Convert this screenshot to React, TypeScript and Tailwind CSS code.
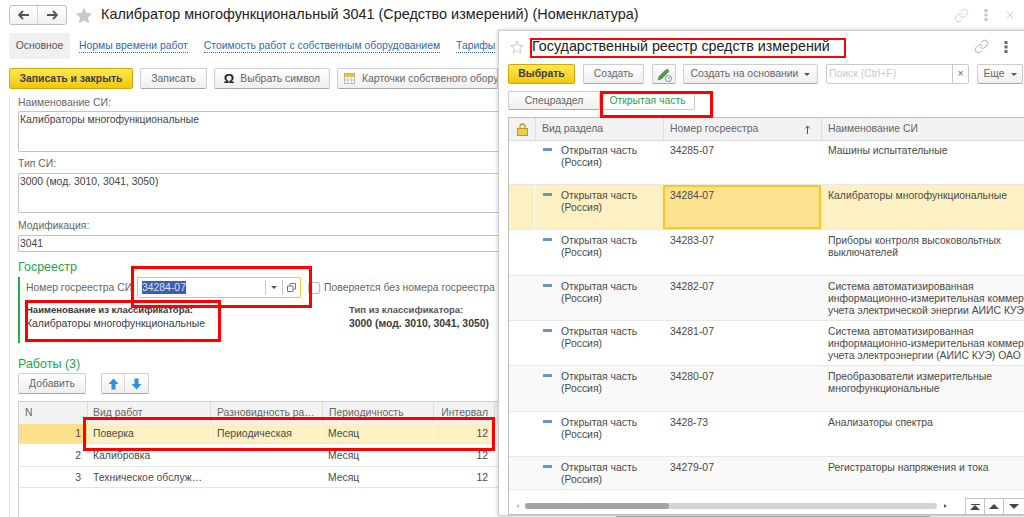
import React from "react";
import { Link, X } from "lucide-react";

const btn =
  "flex items-center justify-center rounded-[2px] border border-[#cdcdcd] border-b-[#a8a8a8] bg-gradient-to-b from-white to-[#efefef] text-[#666] whitespace-nowrap";
const yellowBtn =
  "flex items-center justify-center rounded-[2px] border border-[#d1aa00] bg-gradient-to-b from-[#ffe94d] to-[#f2c600] font-bold text-[#3d3d3d] whitespace-nowrap";

function Field({ label, value, labelCls, h }: { label: string; value: string; labelCls: string; h: string }) {
  return (
    <div className="flex flex-col">
      <div className={`${labelCls} text-[#666]`}>{label}</div>
      <div className={`${h} w-[480px] rounded-l-[2px] border-y border-l border-[#c4c4c4] px-[1px] pt-[1px] leading-[14px] text-[#444]`}>
        {value}
      </div>
    </div>
  );
}

function RedBox({ className }: { className: string }) {
  return <div className={`absolute border-[#f00] ${className}`} />;
}

function Dots({ className }: { className: string }) {
  return (
    <svg width="4" height="14" viewBox="0 0 4 14" className={className}>
      <rect x="0.5" y="1" width="3" height="3" fill="currentColor" />
      <rect x="0.5" y="5.5" width="3" height="3" fill="currentColor" />
      <rect x="0.5" y="10" width="3" height="3" fill="currentColor" />
    </svg>
  );
}

function UpDown({ up }: { up: boolean }) {
  return (
    <svg width="11" height="12" viewBox="0 0 11 12" className={up ? "" : "rotate-180"}>
      <path d="M5.5 0.5 L10.5 6 H7.5 V11.5 H3.5 V6 H0.5 Z" fill="#2f8fd8" />
    </svg>
  );
}

const works = [
  { n: "1", name: "Поверка", kind: "Периодическая", per: "Месяц", int: "12", h: "h-[20px]", active: true },
  { n: "2", name: "Калибровка", kind: "", per: "Месяц", int: "12", h: "h-[23px]", active: false },
  { n: "3", name: "Техническое обслуж…", kind: "", per: "Месяц", int: "12", h: "h-[21px]", active: false },
];

const worksCols = "grid-cols-[68px_123px_112px_111px_61px_1fr]";

function WorksTable() {
  return (
    <div className="mt-[7px] min-h-0 w-[480px] flex-1 border-l border-t border-[#d0d0d0]">
      <div className={`grid h-[22px] ${worksCols} items-center bg-[#f2f2f2] text-[#666]`}>
        <div className="pl-[6px]">N</div>
        <div className="h-full border-l border-[#dcdcdc] pl-[5px] leading-[21px]">Вид работ</div>
        <div className="h-full overflow-hidden whitespace-nowrap border-l border-[#dcdcdc] pl-[6px] leading-[21px]">Разновидность ра…</div>
        <div className="h-full border-l border-[#dcdcdc] pl-[6px] leading-[21px]">Периодичность</div>
        <div className="h-full border-l border-[#dcdcdc] pr-[6px] text-right leading-[21px]">Интервал</div>
        <div className="h-full border-l border-[#dcdcdc]" />
      </div>
      {works.map((r) => (
        <div
          key={r.n}
          className={`grid ${r.h} ${worksCols} items-center border-b border-[#e4e4e4] text-[#4a4a4a] ${r.active ? "bg-[#fdf1c3]" : ""}`}
        >
          <div className={`flex h-full items-center justify-end pr-[6px] pt-[1px] ${r.active ? "bg-[#fde08c]" : ""}`}>{r.n}</div>
          <div className="flex h-full items-center pl-[6px] pt-[1px]">{r.name}</div>
          <div className={`flex h-full items-center pl-[6px] pt-[1px] ${r.active ? "border-x border-[#fff8df]" : ""}`}>{r.kind}</div>
          <div className="flex h-full items-center pl-[6px] pt-[1px]">{r.per}</div>
          <div className={`flex h-full items-center justify-end pr-[6px] pt-[1px] ${r.active ? "border-l border-[#fff8df]" : ""}`}>{r.int}</div>
          <div className="h-full bg-white" />
        </div>
      ))}
    </div>
  );
}

function MainForm() {
  return (
    <div className="flex h-full w-[1024px] flex-col">
      <div className="flex h-[33px] items-center pb-[3px] pl-[9px]">
        <div className="flex h-[20px] w-[58px] rounded-[3px] border border-[#bdbdbd] bg-gradient-to-b from-white to-[#f1f1f1]">
          <div className="flex w-1/2 items-center justify-center border-r border-[#d8d8d8]">
            <svg width="12" height="10" viewBox="0 0 12 10"><path d="M5 1 L1 5 L5 9 M1 5 H11" fill="none" stroke="#555" strokeWidth="1.8" /></svg>
          </div>
          <div className="flex w-1/2 items-center justify-center">
            <svg width="12" height="10" viewBox="0 0 12 10"><path d="M7 1 L11 5 L7 9 M11 5 H1" fill="none" stroke="#555" strokeWidth="1.8" /></svg>
          </div>
        </div>
        <svg width="18" height="17" viewBox="0 0 24 23" className="ml-[8px]">
          <path d="M12 0.5 L15.4 8 L23.5 8.8 L17.4 14.3 L19.2 22.3 L12 18.1 L4.8 22.3 L6.6 14.3 L0.5 8.8 L8.6 8 Z" fill="#c9c9c9" />
        </svg>
        <div className="ml-[8px] whitespace-nowrap text-[14.4px] text-[#222]">
          Калибратор многофункциональный 3041 (Средство измерений) (Номенклатура)
        </div>
        <Link size={15} strokeWidth={1.3} className="ml-auto text-[#c4c4c4]" />
        <Dots className="ml-[15px] text-[#c4c4c4]" />
        <X size={12} strokeWidth={1.5} className="ml-[16px] mr-[8px] text-[#c4c4c4]" />
      </div>

      <div className="flex h-[26px] items-center whitespace-nowrap pl-[9px]">
        <div className="flex h-full w-[61px] items-center justify-center rounded-[2px] bg-[#f0f0f0] text-[#555]">Основное</div>
        <a className="ml-[9px] border-b border-dotted border-[#2f68b5] leading-[13px] text-[#2f68b5]">Нормы времени работ</a>
        <a className="ml-[16px] border-b border-dotted border-[#2f68b5] leading-[13px] text-[#2f68b5]">Стоимость работ с собственным оборудованием</a>
        <a className="ml-[16px] border-b border-dotted border-[#2f68b5] leading-[13px] text-[#2f68b5]">Тарифы</a>
      </div>

      <div className="mt-[9px] flex h-[21px] pl-[9px]">
        <div className={`${yellowBtn} w-[124px]`}>Записать и закрыть</div>
        <div className={`${btn} ml-[7px] w-[67px]`}>Записать</div>
        <div className={`${btn} ml-[7px] w-[116px]`}>
          <span className="mr-[6px] text-[13px] font-bold text-[#222]">Ω</span>Выбрать символ
        </div>
        <div className={`${btn} ml-[7px] w-[161px] !justify-start overflow-hidden pl-[6px]`}>
          <svg width="11" height="11" viewBox="0 0 11 11" className="mr-[7px] shrink-0">
            <rect x="0.5" y="0.5" width="10" height="10" fill="#fff" stroke="#b5b5b5" />
            <rect x="0.5" y="0.5" width="10" height="3" fill="#f1c232" stroke="#c9a227" strokeWidth="0.5" />
            <path d="M3.8 3.5 V10.5 M7.2 3.5 V10.5 M0.5 7 H10.5" stroke="#c4c4c4" />
          </svg>
          Карточки собственого оборудования
        </div>
      </div>

      <div className="ml-[9px] mt-[8px] flex min-h-0 flex-1 flex-col border-l border-[#e2e2e2] pl-[8px]">
        <Field label="Наименование СИ:" value="Калибраторы многофункциональные" labelCls="h-[14px] leading-[12px]" h="h-[41px]" />
        <div className="mt-[5px]">
          <Field label="Тип СИ:" value="3000 (мод. 3010, 3041, 3050)" labelCls="h-[16px] leading-[14px]" h="h-[40px]" />
        </div>
        <div className="mt-[6px]">
          <Field label="Модификация:" value="3041" labelCls="h-[16px] leading-[14px]" h="h-[17px]" />
        </div>

        <div className="mt-[6px] h-[19px] text-[12.5px] leading-[19px] text-[#1ca64c]">Госреестр</div>
        <div className="h-[66px] shrink-0 border-l-2 border-[#2aa84f] pl-[6px]">
          <div className="flex h-[21px] items-center text-[#666]">
            <div className="w-[111px] whitespace-nowrap">Номер госреестра СИ:</div>
            <div className="flex h-[21px] w-[164px] items-center rounded-[1px] border border-[#f5c927] bg-white">
              <span className="ml-[4px] bg-[#3d5fb0] leading-[13px] text-[#d8e0f5]">34284-07</span>
              <div className="ml-auto flex h-full">
                <div className="my-[2px] flex w-[17px] items-center justify-center border-l border-[#c9c9c9]">
                  <div className="border-x-[3px] border-t-[3px] border-x-transparent border-t-[#555]" />
                </div>
                <div className="my-[2px] flex w-[18px] items-center justify-center border-l border-[#c9c9c9]">
                  <svg width="9" height="9" viewBox="0 0 9 9">
                    <path d="M3 3 V0.5 H8.5 V6 H6 M0.5 3 H6 V8.5 H0.5 Z" fill="none" stroke="#777" />
                  </svg>
                </div>
              </div>
            </div>
            <div className="ml-[7px] h-[12px] w-[12px] rounded-[2px] border border-[#bdbdbd]" />
            <div className="ml-[4px] whitespace-nowrap">Поверяется без номера госреестра</div>
          </div>
          <div className="mt-[5px] flex">
            <div className="w-[323px] text-[#3a3a3a]">
              <div className="text-[9.5px] font-bold leading-[14px]">Наименование из классификатора:</div>
              <div className="leading-[14px]">Калибраторы многофункциональные</div>
            </div>
            <div className="text-[#3a3a3a]">
              <div className="text-[9.5px] font-bold leading-[14px] text-[#555]">Тип из классификатора:</div>
              <div className="font-bold leading-[14px]">3000 (мод. 3010, 3041, 3050)</div>
            </div>
          </div>
        </div>

        <div className="mt-[12px] h-[18px] text-[12.5px] leading-[18px] text-[#1ca64c]">Работы (3)</div>
        <div className="flex h-[21px] shrink-0">
          <div className={`${btn} w-[68px]`}>Добавить</div>
          <div className={`${btn} ml-[15px] w-[48px]`}>
            <div className="flex h-full w-1/2 items-center justify-center border-r border-[#d8d8d8]"><UpDown up /></div>
            <div className="flex h-full w-1/2 items-center justify-center"><UpDown up={false} /></div>
          </div>
        </div>
        <WorksTable />
      </div>
    </div>
  );
}

const rows = [
  { num: "34285-07", name: ["Машины испытательные"], h: "h-[44px]", bg: "bg-white", pt: "pt-[4px]" },
  { num: "34284-07", name: ["Калибраторы многофункциональные"], h: "h-[45px]", bg: "bg-[#fdf1c3]", pt: "pt-[5px]", active: true },
  { num: "34283-07", name: ["Приборы контроля высоковольтных", "выключателей"], h: "h-[46px]", bg: "bg-white", pt: "pt-[5px]" },
  { num: "34282-07", name: ["Система автоматизированная", "информационно-измерительная коммерческого", "учета электрической энергии АИИС КУЭ"], h: "h-[45px]", bg: "bg-[#f9f9f9]", pt: "pt-[5px]" },
  { num: "34281-07", name: ["Система автоматизированная", "информационно-измерительная коммерческого", "учета электроэнергии (АИИС КУЭ) ОАО"], h: "h-[45px]", bg: "bg-white", pt: "pt-[5px]" },
  { num: "34280-07", name: ["Преобразователи измерительные", "многофункциональные"], h: "h-[46px]", bg: "bg-[#f9f9f9]", pt: "pt-[5px]" },
  { num: "3428-73", name: ["Анализаторы спектра"], h: "h-[45px]", bg: "bg-white", pt: "pt-[5px]" },
  { num: "34279-07", name: ["Регистраторы напряжения и тока"], h: "h-[33px]", bg: "bg-[#f9f9f9]", pt: "pt-[5px]" },
];

const gridCols = "grid-cols-[26px_128px_158px_1fr]";

function RegistryWindow() {
  return (
    <div className="absolute left-[498px] top-[30px] flex h-[486px] w-[526px] flex-col border-b border-l border-t border-[#cfcfcf] bg-white pl-[9px] shadow-[0_0_4px_rgba(0,0,0,0.25)]">
      <div className="flex h-[33px] shrink-0 items-center pb-[2px]">
        <svg width="14" height="14" viewBox="0 0 24 23" className="ml-[2px]">
          <path d="M12 1.5 L15 8.6 L22.5 9.3 L16.8 14.3 L18.5 21.6 L12 17.8 L5.5 21.6 L7.2 14.3 L1.5 9.3 L9 8.6 Z" fill="none" stroke="#c4c4c4" strokeWidth="1.6" />
        </svg>
        <div className="ml-[8px] whitespace-nowrap text-[14.3px] text-[#222]">Государственный реестр средств измерений</div>
        <Link size={15} className="ml-auto text-[#9a9a9a]" strokeWidth={1.3} />
        <Dots className="ml-[15px] mr-[16px] text-[#666]" />
      </div>

      <div className="flex h-[20px] shrink-0 items-stretch">
        <div className={`${yellowBtn} w-[67px]`}>Выбрать</div>
        <div className={`${btn} ml-[8px] w-[61px]`}>Создать</div>
        <div className={`${btn} ml-[8px] w-[24px]`}>
          <svg width="15" height="15" viewBox="0 0 15 15">
            <path d="M1 13 L2 9.5 L8.5 3 L11 5.5 L4.5 12 Z" fill="#4a9e3f" stroke="#3b7d33" strokeWidth="0.5" />
            <path d="M8.5 3 L10 1.5 L12.5 4 L11 5.5 Z" fill="#7b7b7b" />
            <circle cx="11.5" cy="11.5" r="3" fill="#fff" stroke="#6d8aa8" />
            <path d="M11.5 10 V11.5 H13" fill="none" stroke="#6d8aa8" strokeWidth="0.8" />
          </svg>
        </div>
        <div className={`${btn} ml-[7px] w-[135px]`}>
          Создать на основании
          <div className="ml-[6px] border-x-[3px] border-t-[3px] border-x-transparent border-t-[#555]" />
        </div>
        <div className="ml-[8px] flex w-[143px] items-center rounded-[2px] border border-[#c9c9c9]">
          <span className="ml-[2px] flex-1 text-[#c8c8c8]">Поиск (Ctrl+F)</span>
          <span className="flex h-full w-[16px] items-center justify-center border-l border-[#c9c9c9] text-[#666]">×</span>
        </div>
        <div className={`${btn} ml-[8px] w-[46px]`}>
          Еще
          <div className="ml-[6px] border-x-[3px] border-t-[3px] border-x-transparent border-t-[#555]" />
        </div>
      </div>

      <div className="mt-[7px] flex h-[19px] shrink-0">
        <div className={`${btn} w-[92px]`}>Спецраздел</div>
        <div className="flex w-[95px] items-center justify-center rounded-[2px] border border-[#c9c9c9] bg-white text-[#1ca64c]">Открытая часть</div>
      </div>

      <div className="mt-[7px] flex min-h-0 flex-1 flex-col overflow-hidden border-b border-l border-t border-[#bdbdbd]">
        <div className={`grid h-[23px] shrink-0 ${gridCols} items-center border-b border-[#dcdcdc] bg-[#f2f2f2] text-[#666]`}>
          <div className="flex h-full items-center justify-center">
            <svg width="11" height="13" viewBox="0 0 11 13">
              <path d="M3 6 V3.5 a2.5 2.5 0 0 1 5 0 V6" fill="none" stroke="#b99a2b" strokeWidth="1.3" />
              <rect x="0.5" y="5.5" width="10" height="7" fill="#ecca4b" stroke="#b99a2b" />
            </svg>
          </div>
          <div className="flex h-full items-center border-l border-[#dcdcdc] pl-[6px]">Вид раздела</div>
          <div className="flex h-full items-center justify-between border-l border-[#dcdcdc] pl-[6px] pr-[10px]">
            Номер госреестра
            <svg width="7" height="9" viewBox="0 0 7 9"><path d="M3.5 9 V1 M1 3.5 L3.5 1 L6 3.5" fill="none" stroke="#555" /></svg>
          </div>
          <div className="flex h-full items-center border-l border-[#dcdcdc] pl-[6px]">Наименование СИ</div>
        </div>
        <div className="min-h-0 flex-1 overflow-hidden">
          {rows.map((r) => (
            <div key={r.num} className={`grid ${r.h} ${gridCols} overflow-hidden border-b border-[#e8e8e8] ${r.bg} leading-[12px] text-[#4a4a4a]`}>
              <div className={r.active ? "border-r border-white" : ""} />
              <div className={`flex ${r.pt}`}>
                <div className="ml-[8px] mt-[3px] h-[3px] w-[9px] shrink-0 bg-[#6b97bf]" />
                <div className="ml-[9px]">Открытая часть<br />(Россия)</div>
              </div>
              <div className={r.active ? "border-2 border-[#fcc81e] bg-[#fde28f] pl-[5px] pt-[3px]" : `pl-[7px] ${r.pt}`}>{r.num}</div>
              <div className={`whitespace-nowrap pl-[7px] ${r.pt}`}>
                {r.name.map((l) => (
                  <div key={l}>{l}</div>
                ))}
              </div>
            </div>
          ))}
        </div>
        <div className="flex h-[16px] shrink-0 items-center bg-white">
          <div className="ml-[7px] border-y-[2px] border-r-[3px] border-y-transparent border-r-[#bbb]" />
          <div className="ml-[6px] h-[6px] w-[422px] rounded-full bg-[#d4d4d4]">
            <div className="h-full w-[144px] rounded-full bg-[#a3a3a3]" />
          </div>
          <div className="ml-[7px] border-y-[2px] border-l-[3px] border-y-transparent border-l-[#666]" />
          <div className="ml-[18px] flex h-full w-[60px] border-t border-[#c4c4c4]">
            <div className="flex w-[20px] flex-col items-center justify-center border-x border-[#c4c4c4]">
              <div className="h-[1px] w-[9px] bg-[#444]" />
              <div className="border-x-[5px] border-b-[5px] border-x-transparent border-b-[#444]" />
            </div>
            <div className="flex w-[19px] items-center justify-center border-r border-[#c4c4c4]">
              <div className="border-x-[5px] border-b-[5px] border-x-transparent border-b-[#444]" />
            </div>
            <div className="flex w-[19px] items-center justify-center">
              <div className="border-x-[5px] border-t-[5px] border-x-transparent border-t-[#444]" />
            </div>
          </div>
        </div>
      </div>
    </div>
  );
}

export default function App() {
  return (
    <div className="relative h-[517px] w-[1024px] overflow-hidden bg-white font-['Liberation_Sans',Arial,sans-serif] text-[10.4px]">
      <MainForm />
      <RegistryWindow />
      <div className="absolute bottom-0 left-[616px] h-[1px] w-[314px] bg-[#a3a3a3]" />
      <RedBox className="left-[530px] top-[38px] h-[20px] w-[316px] border-2" />
      <RedBox className="left-[600px] top-[91px] h-[27px] w-[113px] border-[3px]" />
      <RedBox className="left-[131px] top-[266px] h-[42px] w-[181px] border-[3px]" />
      <RedBox className="left-[25px] top-[300px] h-[42px] w-[196px] border-[3px]" />
      <RedBox className="left-[83px] top-[417px] h-[34px] w-[412px] border-[3px]" />
    </div>
  );
}
